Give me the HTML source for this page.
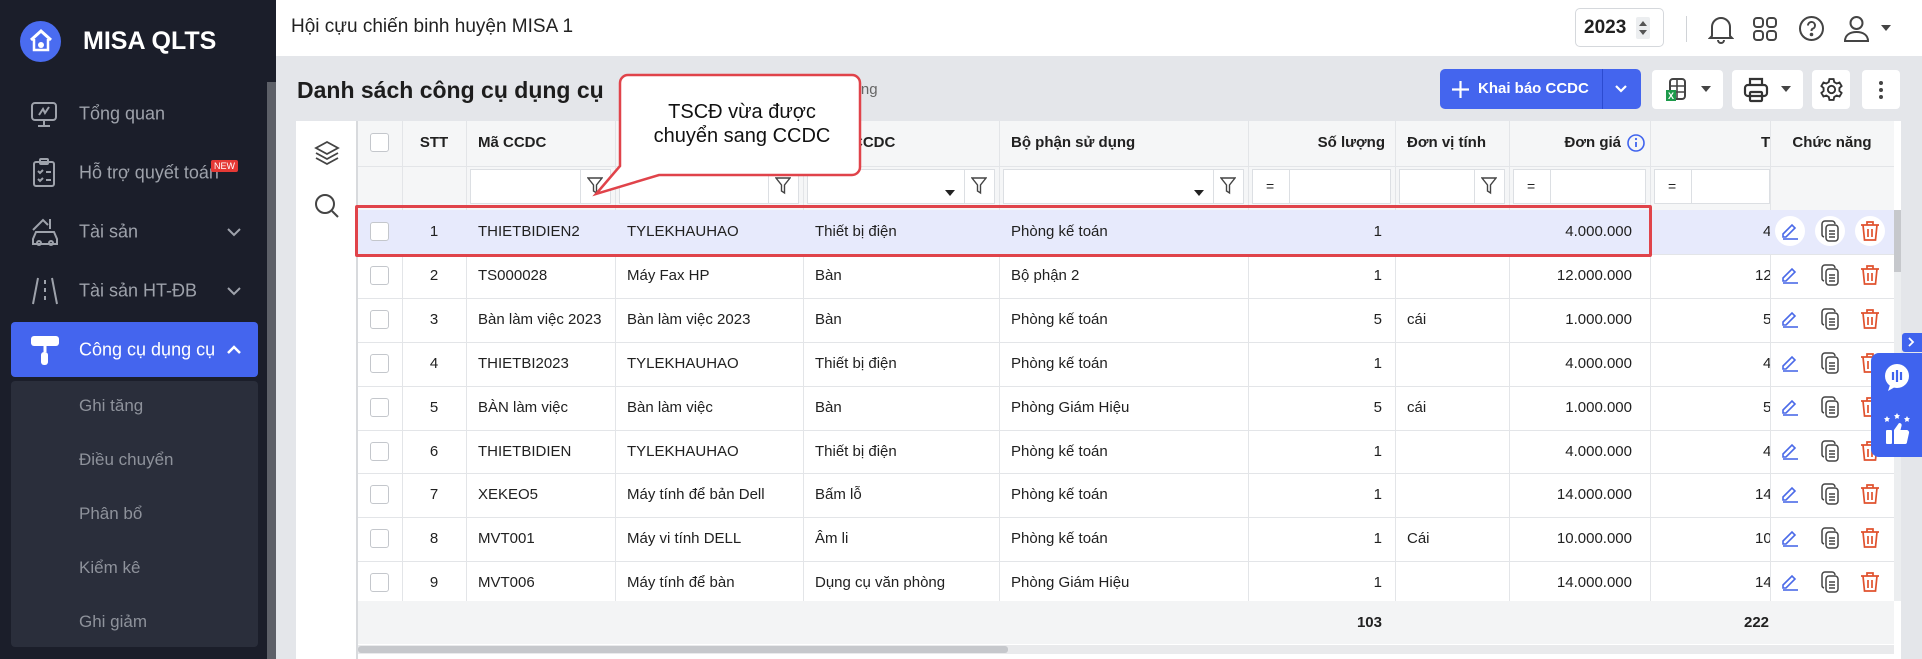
<!DOCTYPE html>
<html><head><meta charset="utf-8">
<style>
*{box-sizing:border-box;margin:0;padding:0}
body{width:1922px;height:659px;overflow:hidden;position:relative;background:#e4e6ea;font-family:"Liberation Sans",sans-serif;color:#212121}
.a{position:absolute}
#sb{left:0;top:0;width:276px;height:659px;background:#1b1e2a}
.mi{position:absolute;left:79px;font-size:18px;color:#9ea2ab;transform:translateY(-50%)}
.mic{position:absolute;left:30px;transform:translateY(-50%)}
.chev{position:absolute;left:226px;transform:translateY(-50%)}
.sub{position:absolute;left:79px;font-size:17px;color:#8e929b;transform:translateY(-50%)}
.cell{position:absolute;font-size:15px;white-space:nowrap;overflow:hidden;text-overflow:ellipsis;line-height:20px}
.clip{position:absolute;font-size:15px;white-space:nowrap;overflow:hidden;line-height:20px;left:1650px;width:120px}
.vl{position:absolute;width:1px;background:#e3e5e8}
.hl{position:absolute;height:1px;background:#e3e5e8}
.inp{position:absolute;background:#fff;border:1px solid #dcdfe3;height:35px;top:169px}
.cb{position:absolute;width:19px;height:19px;border:1px solid #c4c7cc;border-radius:3px;background:#fff;left:370px}
.btn{position:absolute;background:#fff;border-radius:4px;top:70px;height:39px}
</style></head><body>
<div id="sb" class="a">
 <div class="a" style="left:20px;top:21px;width:41px;height:41px;border-radius:50%;background:#4a6cf0"></div>
 <svg class="a" style="left:26px;top:26px" width="30" height="30" viewBox="0 0 30 30"><path d="M5 14 L15 5 L25 14" stroke="#fff" stroke-width="3" fill="none"/><path d="M8 13 V24 H22 V13" stroke="#fff" stroke-width="2.5" fill="none"/><circle cx="15" cy="19" r="3" fill="#fff"/></svg>
 <div class="a" style="left:83px;top:27px;font-size:25px;font-weight:bold;color:#fff">MISA QLTS</div>
 <div class="a" style="left:267px;top:82px;width:9px;height:577px;background:#5d6068"></div>
 <svg class="mic" style="top:114px" width="28" height="28" viewBox="0 0 28 28" fill="none" stroke="#9ea2ab" stroke-width="2"><rect x="2" y="3" width="24" height="17" rx="3"/><path d="M14 20v6M8 26h12M9 15l4-6 2 4 4-6"/></svg>
 <div class="mi" style="top:114px">Tổng quan</div>
 <svg class="mic" style="top:173px" width="28" height="30" viewBox="0 0 28 30" fill="none" stroke="#9ea2ab" stroke-width="2"><rect x="4" y="4" width="20" height="24" rx="2"/><rect x="10" y="1" width="8" height="5" rx="1"/><path d="M8 13l2 2 3-3M8 21l2 2 3-3M16 14h5M16 22h5"/></svg>
 <div class="mi" style="top:173px">Hỗ trợ quyết toán</div>
 <div class="a" style="left:211px;top:160px;background:#e53935;color:#fff;font-size:9px;padding:1px 3px;border-radius:2px">NEW</div>
 <svg class="mic" style="top:232px" width="30" height="30" viewBox="0 0 30 30" fill="none" stroke="#9ea2ab" stroke-width="2"><path d="M3 13L13 3l5 5M20 2v10"/><path d="M3 22l3-7h18l3 7v5H3z"/><circle cx="9" cy="26" r="2"/><circle cx="21" cy="26" r="2"/></svg>
 <div class="mi" style="top:232px">Tài sản</div>
 <svg class="chev" style="top:232px" width="16" height="10" viewBox="0 0 16 10"><path d="M2 2l6 6 6-6" stroke="#9ea2ab" stroke-width="2" fill="none"/></svg>
 <svg class="mic" style="top:291px" width="30" height="30" viewBox="0 0 30 30" fill="none" stroke="#9ea2ab" stroke-width="2"><path d="M8 2L3 28M22 2l5 26M15 4v4M15 12v4M15 20v4"/></svg>
 <div class="mi" style="top:291px">Tài sản HT-ĐB</div>
 <svg class="chev" style="top:291px" width="16" height="10" viewBox="0 0 16 10"><path d="M2 2l6 6 6-6" stroke="#9ea2ab" stroke-width="2" fill="none"/></svg>
 <div class="a" style="left:11px;top:322px;width:247px;height:55px;background:#4465ee;border-radius:4px"></div>
 <svg class="mic" style="top:350px" width="30" height="32" viewBox="0 0 30 32"><rect x="1" y="2" width="28" height="10" rx="3" fill="#fff"/><path d="M15 12v6" stroke="#fff" stroke-width="3"/><rect x="11" y="18" width="7" height="13" rx="3" fill="#fff"/></svg>
 <div class="mi" style="top:350px;color:#fff">Công cụ dụng cụ</div>
 <svg class="chev" style="top:350px" width="16" height="10" viewBox="0 0 16 10"><path d="M2 8l6-6 6 6" stroke="#fff" stroke-width="2.5" fill="none"/></svg>
 <div class="a" style="left:11px;top:381px;width:247px;height:266px;background:#2a2e3b;border-radius:4px"></div>
 <div class="sub" style="top:406px">Ghi tăng</div>
 <div class="sub" style="top:460px">Điều chuyển</div>
 <div class="sub" style="top:514px">Phân bổ</div>
 <div class="sub" style="top:568px">Kiểm kê</div>
 <div class="sub" style="top:622px">Ghi giảm</div>
</div>
<div class="a" style="left:276px;top:0;width:1646px;height:56px;background:#fff"></div>
<div class="a" style="left:291px;top:16px;font-size:19px;color:#222">Hội cựu chiến binh huyện MISA 1</div>
<div class="a" style="left:1575px;top:8px;width:89px;height:39px;border:1px solid #d5d8dc;border-radius:5px;background:#fff"></div>
<div class="a" style="left:1584px;top:17px;font-size:19px;font-weight:bold">2023</div>
<div class="a" style="left:1636px;top:17px;width:14px;height:22px;background:#eceef0;border-radius:2px"></div>
<svg class="a" style="left:1638px;top:20px" width="10" height="16" viewBox="0 0 10 16"><path d="M1 6l4-5 4 5zM1 10l4 5 4-5z" fill="#555"/></svg>
<div class="a" style="left:1686px;top:16px;width:1px;height:26px;background:#d0d3d7"></div>
<svg class="a" style="left:1708px;top:14px" width="26" height="30" viewBox="0 0 26 30" fill="none" stroke="#444" stroke-width="2"><path d="M4 22V13a9 9 0 0 1 18 0v9l2 2H2z"/><path d="M10 26a3 3 0 0 0 6 0"/></svg>
<svg class="a" style="left:1752px;top:16px" width="26" height="26" viewBox="0 0 26 26" fill="none" stroke="#444" stroke-width="2"><rect x="2" y="2" width="9" height="9" rx="3"/><rect x="15" y="2" width="9" height="9" rx="3"/><rect x="2" y="15" width="9" height="9" rx="3"/><rect x="15" y="15" width="9" height="9" rx="3"/></svg>
<svg class="a" style="left:1798px;top:15px" width="27" height="27" viewBox="0 0 27 27" fill="none" stroke="#444" stroke-width="2"><circle cx="13.5" cy="13.5" r="11.5"/><path d="M10 10.5a3.5 3.5 0 1 1 4.5 3.3c-1 .4-1 1.2-1 2.2"/><circle cx="13.5" cy="19.5" r=".8" fill="#444"/></svg>
<svg class="a" style="left:1843px;top:14px" width="27" height="30" viewBox="0 0 27 30" fill="none" stroke="#444" stroke-width="2"><circle cx="13.5" cy="9" r="6"/><path d="M2 27c0-6 5-9 11.5-9S25 21 25 27z"/></svg>
<svg class="a" style="left:1881px;top:25px" width="10" height="7" viewBox="0 0 10 7"><path d="M0 0h10L5 6z" fill="#444"/></svg>
<div class="a" style="left:297px;top:77px;font-size:23px;font-weight:bold;color:#1d1d1d">Danh sách công cụ dụng cụ</div>
<div class="a" style="left:820px;top:81px;font-size:15px;color:#666">Sử dụng</div>
<div class="a" style="left:1440px;top:69px;width:201px;height:40px;background:#4465ee;border-radius:5px"></div>
<svg class="a" style="left:1451px;top:80px" width="19" height="19" viewBox="0 0 19 19"><path d="M9.5 1v17M1 9.5h17" stroke="#fff" stroke-width="2.2"/></svg>
<div class="a" style="left:1478px;top:80px;font-size:15px;font-weight:bold;color:#fff">Khai báo CCDC</div>
<div class="a" style="left:1602px;top:69px;width:1px;height:40px;background:#2c4bd0"></div>
<svg class="a" style="left:1615px;top:85px" width="12" height="8" viewBox="0 0 12 8"><path d="M1 1l5 5 5-5" stroke="#fff" stroke-width="2.2" fill="none"/></svg>
<div class="btn" style="left:1652px;width:71px"></div>
<svg class="a" style="left:1665px;top:78px" width="22" height="24" viewBox="0 0 22 24"><rect x="5" y="1" width="15" height="20" rx="3" fill="none" stroke="#444" stroke-width="2"/><path d="M5 8h15M5 14h15M12 1v20" stroke="#444" stroke-width="1.6"/><rect x="1" y="12" width="10" height="11" fill="#1d9a4b"/><text x="3" y="21" font-size="9" fill="#fff" font-family="Liberation Sans" font-weight="bold">X</text></svg>
<svg class="a" style="left:1701px;top:86px" width="10" height="7" viewBox="0 0 10 7"><path d="M0 0h10L5 6z" fill="#444"/></svg>
<div class="btn" style="left:1732px;width:71px"></div>
<svg class="a" style="left:1743px;top:77px" width="26" height="26" viewBox="0 0 26 26" fill="none" stroke="#333" stroke-width="2.2"><path d="M7 8V2h12v6"/><rect x="2" y="8" width="22" height="11" rx="3"/><rect x="7" y="15" width="12" height="9" rx="1"/></svg>
<svg class="a" style="left:1781px;top:86px" width="10" height="7" viewBox="0 0 10 7"><path d="M0 0h10L5 6z" fill="#444"/></svg>
<div class="btn" style="left:1812px;width:38px"></div>
<svg class="a" style="left:1819px;top:77px" width="25" height="25" viewBox="0 0 24 24" fill="none" stroke="#333" stroke-width="1.8"><circle cx="12" cy="12" r="3.5"/><path d="M10 2h4l.6 2.8 2.4 1.4 2.7-.9 2 3.4-2.1 1.9v2.8l2.1 1.9-2 3.4-2.7-.9-2.4 1.4L14 22h-4l-.6-2.8-2.4-1.4-2.7.9-2-3.4 2.1-1.9v-2.8L2.3 8.7l2-3.4 2.7.9 2.4-1.4z"/></svg>
<div class="btn" style="left:1862px;width:38px"></div>
<svg class="a" style="left:1878px;top:80px" width="6" height="20" viewBox="0 0 6 20"><circle cx="3" cy="3" r="2" fill="#444"/><circle cx="3" cy="10" r="2" fill="#444"/><circle cx="3" cy="17" r="2" fill="#444"/></svg>
<div class="a" style="left:296px;top:121px;width:1605px;height:538px;background:#fff"></div>
<div class="a" style="left:356px;top:121px;width:2px;height:538px;background:#d8dadd"></div>
<svg class="a" style="left:314px;top:140px" width="26" height="26" viewBox="0 0 26 26" fill="none" stroke="#444" stroke-width="1.8"><path d="M13 2L2 8l11 6 11-6z"/><path d="M2 13l11 6 11-6M2 18l11 6 11-6"/></svg>
<svg class="a" style="left:314px;top:193px" width="26" height="26" viewBox="0 0 26 26" fill="none" stroke="#444" stroke-width="2"><circle cx="11" cy="11" r="9"/><path d="M18 18l6 6"/></svg>
<div class="a" style="left:358px;top:121px;width:1536px;height:89px;background:#f5f6f7"></div>
<div class="hl" style="left:358px;top:166px;width:1536px"></div>
<div id="grid"></div>
<div class="a" style="left:358px;top:210px;width:1536px;height:44px;background:#e7eafc"></div>
<div class="a" style="left:358px;top:601px;width:1536px;height:43px;background:#f3f4f5"></div>
<div class="a" style="left:358px;top:645px;width:1536px;height:9px;background:#e9eaec"></div>
<div class="a" style="left:358px;top:646px;width:650px;height:7px;background:#c6c8cc;border-radius:3px"></div>
<div class="a" style="left:1894px;top:210px;width:7px;height:391px;background:#eceef0"></div>
<div class="a" style="left:1894px;top:210px;width:7px;height:62px;background:#c6c8cc"></div>
<div id="rows"></div>
<div class="a" style="left:355px;top:205px;width:1297px;height:52px;border:3px solid #e0434a;border-radius:2px"></div>
<svg class="a" style="left:590px;top:70px" width="280" height="130" viewBox="0 0 280 130"><path d="M38 5 H262 a8 8 0 0 1 8 8 V97 a8 8 0 0 1 -8 8 H69 L6 124 L30 96 V13 a8 8 0 0 1 8 -8z" fill="#fff" stroke="#e0434a" stroke-width="2.5"/></svg>
<div class="a" style="left:622px;top:100px;width:240px;text-align:center;font-size:20px;line-height:24px;color:#111">TSCĐ vừa được<br>chuyển sang CCDC</div>
<div class="a" style="left:1902px;top:333px;width:20px;height:19px;background:#3f63ee;border-radius:3px 0 0 3px"></div>
<svg class="a" style="left:1907px;top:336px" width="8" height="12" viewBox="0 0 8 12"><path d="M2 2l4 4-4 4" stroke="#fff" stroke-width="1.8" fill="none"/></svg>
<div class="a" style="left:1871px;top:353px;width:51px;height:104px;background:#3f63ee;border-radius:8px 0 0 8px"></div>
<svg class="a" style="left:1882px;top:362px" width="30" height="30" viewBox="0 0 30 30"><circle cx="15" cy="14" r="12" fill="#fff"/><path d="M8 23l-2 6 7-4z" fill="#fff"/><path d="M11 10v8M15 8v12M19 10v8" stroke="#3f63ee" stroke-width="2.2"/></svg>
<svg class="a" style="left:1881px;top:412px" width="32" height="34" viewBox="0 0 32 34" fill="#fff"><path d="M6 4l1 2 2 .3-1.5 1.4.4 2.1L6 9l-1.9 1 .4-2.1L3 6.3 5 6zM16 1l1 2 2 .3-1.5 1.4.4 2.1L16 6l-1.9 1 .4-2.1L13 3.3 15 3zM26 4l1 2 2 .3-1.5 1.4.4 2.1L26 9l-1.9 1 .4-2.1L23 6.3 25 6z"/><rect x="5" y="18" width="6" height="14" rx="1"/><path d="M13 18l5-7c2 0 3 1 2.5 3l-1 4H26a2.5 2.5 0 0 1 2 3l-2 9a2 2 0 0 1-2 2H13z"/></svg>
<script>
var cols=[358,402,466,615,803,999,1248,1395,1509,1650,1770,1894];
var g='';
for(var i=1;i<cols.length-1;i++){g+='<div class="vl" style="left:'+cols[i]+'px;top:121px;height:523px"></div>';}
var rt=210,rh=43.9;
for(var r=0;r<=9;r++){g+='<div class="hl" style="left:358px;top:'+Math.round(rt+r*rh)+'px;width:1536px"></div>';}
function h(x,w,t,al){return '<div class="cell" style="left:'+x+'px;width:'+w+'px;top:133px;font-weight:bold;font-size:15px;text-align:'+(al||'left')+'">'+t+'</div>';}
g+='<div class="cb" style="top:133px"></div>';
g+=h(402,64,'STT','center')+h(478,130,'Mã CCDC')+h(627,170,'Tên CCDC')+h(817,170,'Loại CCDC')+h(1011,230,'Bộ phận sử dụng')+h(1248,137,'Số lượng','right')+h(1407,100,'Đơn vị tính')+h(1509,112,'Đơn giá','right')+h(1770,124,'Chức năng','center');
g+='<div class="clip" style="top:133px;font-weight:bold"><span style="padding-left:111px">Tổng tiền</span></div>';
g+='<svg class="a" style="left:1627px;top:134px" width="18" height="18" viewBox="0 0 18 18"><circle cx="9" cy="9" r="8" fill="none" stroke="#3f63ee" stroke-width="1.6"/><path d="M9 8v5" stroke="#3f63ee" stroke-width="1.8"/><circle cx="9" cy="5" r="1.1" fill="#3f63ee"/></svg>';
var fil='<svg width="16" height="18" viewBox="0 0 16 18"><path d="M1 1h14l-5.5 7v8l-3-2V8z" fill="none" stroke="#444" stroke-width="1.4"/></svg>';
var dd='<svg width="10" height="6" viewBox="0 0 10 6"><path d="M0 0h10L5 6z" fill="#222"/></svg>';
function fin(x,w,dropdown){var s='<div class="inp" style="left:'+x+'px;width:'+w+'px"></div>';s+='<div class="a" style="left:'+(x+w-31)+'px;top:169px;width:1px;height:35px;background:#dcdfe3"></div><div class="a" style="left:'+(x+w-24)+'px;top:177px">'+fil+'</div>';if(dropdown)s+='<div class="a" style="left:'+(x+w-50)+'px;top:183px">'+dd+'</div>';return s;}
function fnum(x,w){return '<div class="inp" style="left:'+x+'px;width:'+w+'px"></div><div class="a" style="left:'+(x+37)+'px;top:169px;width:1px;height:35px;background:#dcdfe3"></div><div class="a" style="left:'+(x+14)+'px;top:178px;font-size:14px">=</div>';}
g+=fin(470,141)+fin(619,180)+fin(807,188,1)+fin(1003,241,1)+fnum(1252,139)+fin(1399,106)+fnum(1513,133)+fnum(1654,116);
document.getElementById('grid').innerHTML=g;
var d=[
['THIETBIDIEN2','TYLEKHAUHAO','Thiết bị điện','Phòng kế toán','1','','4.000.000','4.000.000'],
['TS000028','Máy Fax HP','Bàn','Bộ phận 2','1','','12.000.000','12.000.000'],
['Bàn làm việc 2023','Bàn làm việc 2023','Bàn','Phòng kế toán','5','cái','1.000.000','5.000.000'],
['THIETBI2023','TYLEKHAUHAO','Thiết bị điện','Phòng kế toán','1','','4.000.000','4.000.000'],
['BÀN làm việc','Bàn làm việc','Bàn','Phòng Giám Hiệu','5','cái','1.000.000','5.000.000'],
['THIETBIDIEN','TYLEKHAUHAO','Thiết bị điện','Phòng kế toán','1','','4.000.000','4.000.000'],
['XEKEO5','Máy tính để bản Dell','Bấm lỗ','Phòng kế toán','1','','14.000.000','14.000.000'],
['MVT001','Máy vi tính DELL','Âm li','Phòng kế toán','1','Cái','10.000.000','10.000.000'],
['MVT006','Máy tính để bàn','Dụng cụ văn phòng','Phòng Giám Hiệu','1','','14.000.000','14.000.000']];
var edit='<svg width="20" height="20" viewBox="0 0 20 20" fill="none" stroke="#4b6ae8" stroke-width="1.6"><path d="M3 13L12 4l3 3-9 9H3z"/><path d="M3 18h15"/></svg>';
var copy='<svg width="20" height="22" viewBox="0 0 20 22" fill="none" stroke="#444" stroke-width="1.5"><rect x="6" y="5" width="12" height="16" rx="3"/><path d="M4 17a3 3 0 0 1-2-3V4a3 3 0 0 1 3-3h7a3 3 0 0 1 3 3"/><path d="M9 11h6M9 14h6M9 17h6"/></svg>';
var del='<svg width="20" height="22" viewBox="0 0 20 22" fill="none" stroke="#e0522e" stroke-width="1.7"><path d="M1 5h18M7 5V2h6v3M3 5l1.5 15h11L17 5M8 9v8M12 9v8"/></svg>';
var s='';
for(var r=0;r<9;r++){var y=Math.round(rt+r*rh),c=y+12,x=d[r];
function cl(l,w,t,al){return '<div class="cell" style="left:'+l+'px;width:'+w+'px;top:'+c+'px;text-align:'+(al||'left')+'">'+t+'</div>';}
s+='<div class="cb" style="top:'+(y+12)+'px"></div>';
s+=cl(402,64,r+1,'center')+cl(478,130,x[0])+cl(627,170,x[1])+cl(815,180,x[2])+cl(1011,230,x[3])+cl(1248,134,x[4],'right')+cl(1407,100,x[5])+cl(1509,123,x[6],'right');
s+='<div class="clip" style="top:'+c+'px"><span style="padding-left:'+(x[7].length>9?105:113)+'px">'+x[7]+'</span></div>';
var bg=r==0?'background:#fff;border-radius:50%;':'';
s+='<div class="a" style="left:1775px;top:'+(y+6)+'px;width:30px;height:30px;'+bg+'display:flex;align-items:center;justify-content:center">'+edit+'</div>';
s+='<div class="a" style="left:1815px;top:'+(y+6)+'px;width:30px;height:30px;'+bg+'display:flex;align-items:center;justify-content:center">'+copy+'</div>';
s+='<div class="a" style="left:1855px;top:'+(y+6)+'px;width:30px;height:30px;'+bg+'display:flex;align-items:center;justify-content:center">'+del+'</div>';
}
s+='<div class="cell" style="left:1248px;width:134px;top:613px;text-align:right;font-weight:bold">103</div>';
s+='<div class="clip" style="top:613px;font-weight:bold"><span style="padding-left:94px">222.000.000</span></div>';
document.getElementById('rows').innerHTML=s;
</script>
</body></html>
